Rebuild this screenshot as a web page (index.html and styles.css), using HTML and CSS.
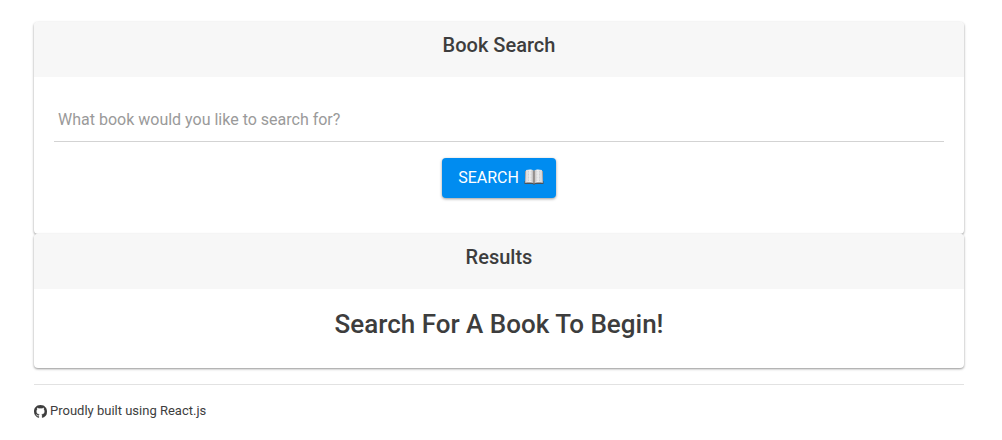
FILE: index.html
```html
<!DOCTYPE html>
<html lang="en">
<head>
<meta charset="utf-8">
<meta name="viewport" content="width=device-width, initial-scale=1">
<title>Book Search</title>
<link rel="stylesheet" href="styles.css">
</head>
<body>
<main>
<section class="card">
<h1 class="card-header">Book Search</h1>
<form class="search-form">
<input class="search-input" type="text" aria-label="Book title" placeholder="What book would you like to search for?">
<button class="search-button" type="submit">SEARCH
<svg class="book-icon" viewBox="0 0 20 18" aria-hidden="true">
<defs>
<linearGradient id="left-page"><stop offset="0" stop-color="#d5d5d8"/><stop offset=".6" stop-color="#f1f1f2"/><stop offset="1" stop-color="#aaa5a5"/></linearGradient>
<linearGradient id="right-page"><stop offset="0" stop-color="#b5b0af"/><stop offset=".4" stop-color="#f1f1f2"/><stop offset="1" stop-color="#d0d0d3"/></linearGradient>
</defs>
<path d="M.5 13h19v3h-7.900l-1.600.8-1.600-.8H.5z" fill="#4b5259"/>
<path d="M1 3h18v11.800H1z" fill="#96999d"/>
<path d="M2 2c3-.9 6-.9 8 .6v13c-2-1.400-5.500-1.600-8.600-.8z" fill="url(#left-page)"/>
<path d="M18 2c-3-.9-6-.9-8 .6v13c2-1.400 5.500-1.600 8.600-.8z" fill="url(#right-page)"/>
<path d="M4.500 3v10M7 3v10M13 3v10M15.500 3v10" stroke="#c6c6ca" stroke-width=".7" stroke-dasharray="1 .5"/>
<path d="M10 2.600v13" stroke="#77706d" stroke-width="1"/>
</svg>
</button>
</form>
</section>
<section class="card">
<h2 class="card-header">Results</h2>
<div class="results"><h2 class="message">Search For A Book To Begin!</h2></div>
</section>
</main>
<footer class="footer">
<svg class="github-icon" viewBox="0 0 16 16" aria-hidden="true"><path fill="currentColor" stroke="currentColor" stroke-width=".3" d="M8 0C3.580 0 0 3.580 0 8c0 3.540 2.290 6.530 5.470 7.590.4.070.55-.17.55-.38 0-.19-.01-.82-.01-1.490-2.010.37-2.530-.49-2.690-.94-.09-.23-.48-.94-.82-1.130-.28-.15-.68-.52-.01-.53.63-.01 1.080.58 1.230.82.72 1.210 1.870.87 2.330.66.07-.52.28-.87.51-1.070-1.780-.2-3.640-.89-3.640-3.950 0-.87.31-1.590.82-2.150-.08-.2-.36-1.020.08-2.120 0 0 .67-.21 2.200.82A7.600 7.600 0 0 1 8 3.860c.68 0 1.360.09 2 .27 1.530-1.040 2.200-.82 2.200-.82.44 1.100.16 1.920.08 2.120.51.56.82 1.270.82 2.150 0 3.070-1.870 3.750-3.650 3.950.29.25.54.73.54 1.480 0 1.070-.01 1.930-.01 2.200 0 .21.15.46.55.38A8.010 8.010 0 0 0 16 8c0-4.420-3.580-8-8-8z"/></svg>
<span>Proudly built using React.js</span>
</footer>
</body>
</html>
```
FILE: styles.css
```css
* { box-sizing: border-box; }
body {
  margin: 0;
  padding: 22px 38px 16px 34px;
  background: #fff;
  color: #3d3d3d;
  font-family: Roboto, sans-serif;
}
.card {
  border-radius: 4px;
  overflow: hidden;
  background: #fff;
  box-shadow: 0 1px 3px rgba(0, 0, 0, .22), 0 1px 2px rgba(0, 0, 0, .24);
}
.card-header {
  margin: 0;
  padding: 12px 20px 20px;
  background: #f7f7f7;
  font-size: 20px;
  line-height: 23px;
  font-weight: 500;
  text-align: center;
}
.search-form {
  display: flex;
  flex-direction: column;
  align-items: center;
  gap: 16px;
  padding: 20px 20px 36px;
}
.search-input {
  width: 100%;
  height: 45px;
  padding: 0 4px;
  border: 0;
  border-bottom: 1px solid #d3d3d3;
  outline: 0;
  background: transparent;
  color: inherit;
  font: 16px Roboto, sans-serif;
}
.search-input::placeholder { color: #9a9a9a; opacity: 1; }
.search-button {
  display: flex;
  align-items: center;
  gap: 5px;
  height: 40px;
  padding: 0 12px 2px 16px;
  border: 0;
  border-radius: 4px;
  background: #008cf0;
  box-shadow: 0 1px 3px rgba(0, 0, 0, .4);
  color: #fff;
  font: 16px Roboto, sans-serif;
  cursor: pointer;
}
.book-icon { width: 20px; height: 18px; }
.results { padding: 20px 20px 28px; }
.message {
  margin: 0;
  font-size: 26px;
  line-height: 31px;
  font-weight: 500;
  text-align: center;
}
.footer {
  display: flex;
  align-items: center;
  gap: 3px;
  margin-top: 16px;
  padding-top: 16px;
  border-top: 1px solid #e2e2e2;
  font-size: 13px;
  line-height: 20px;
}
.github-icon { width: 13px; height: 13px; }
```
